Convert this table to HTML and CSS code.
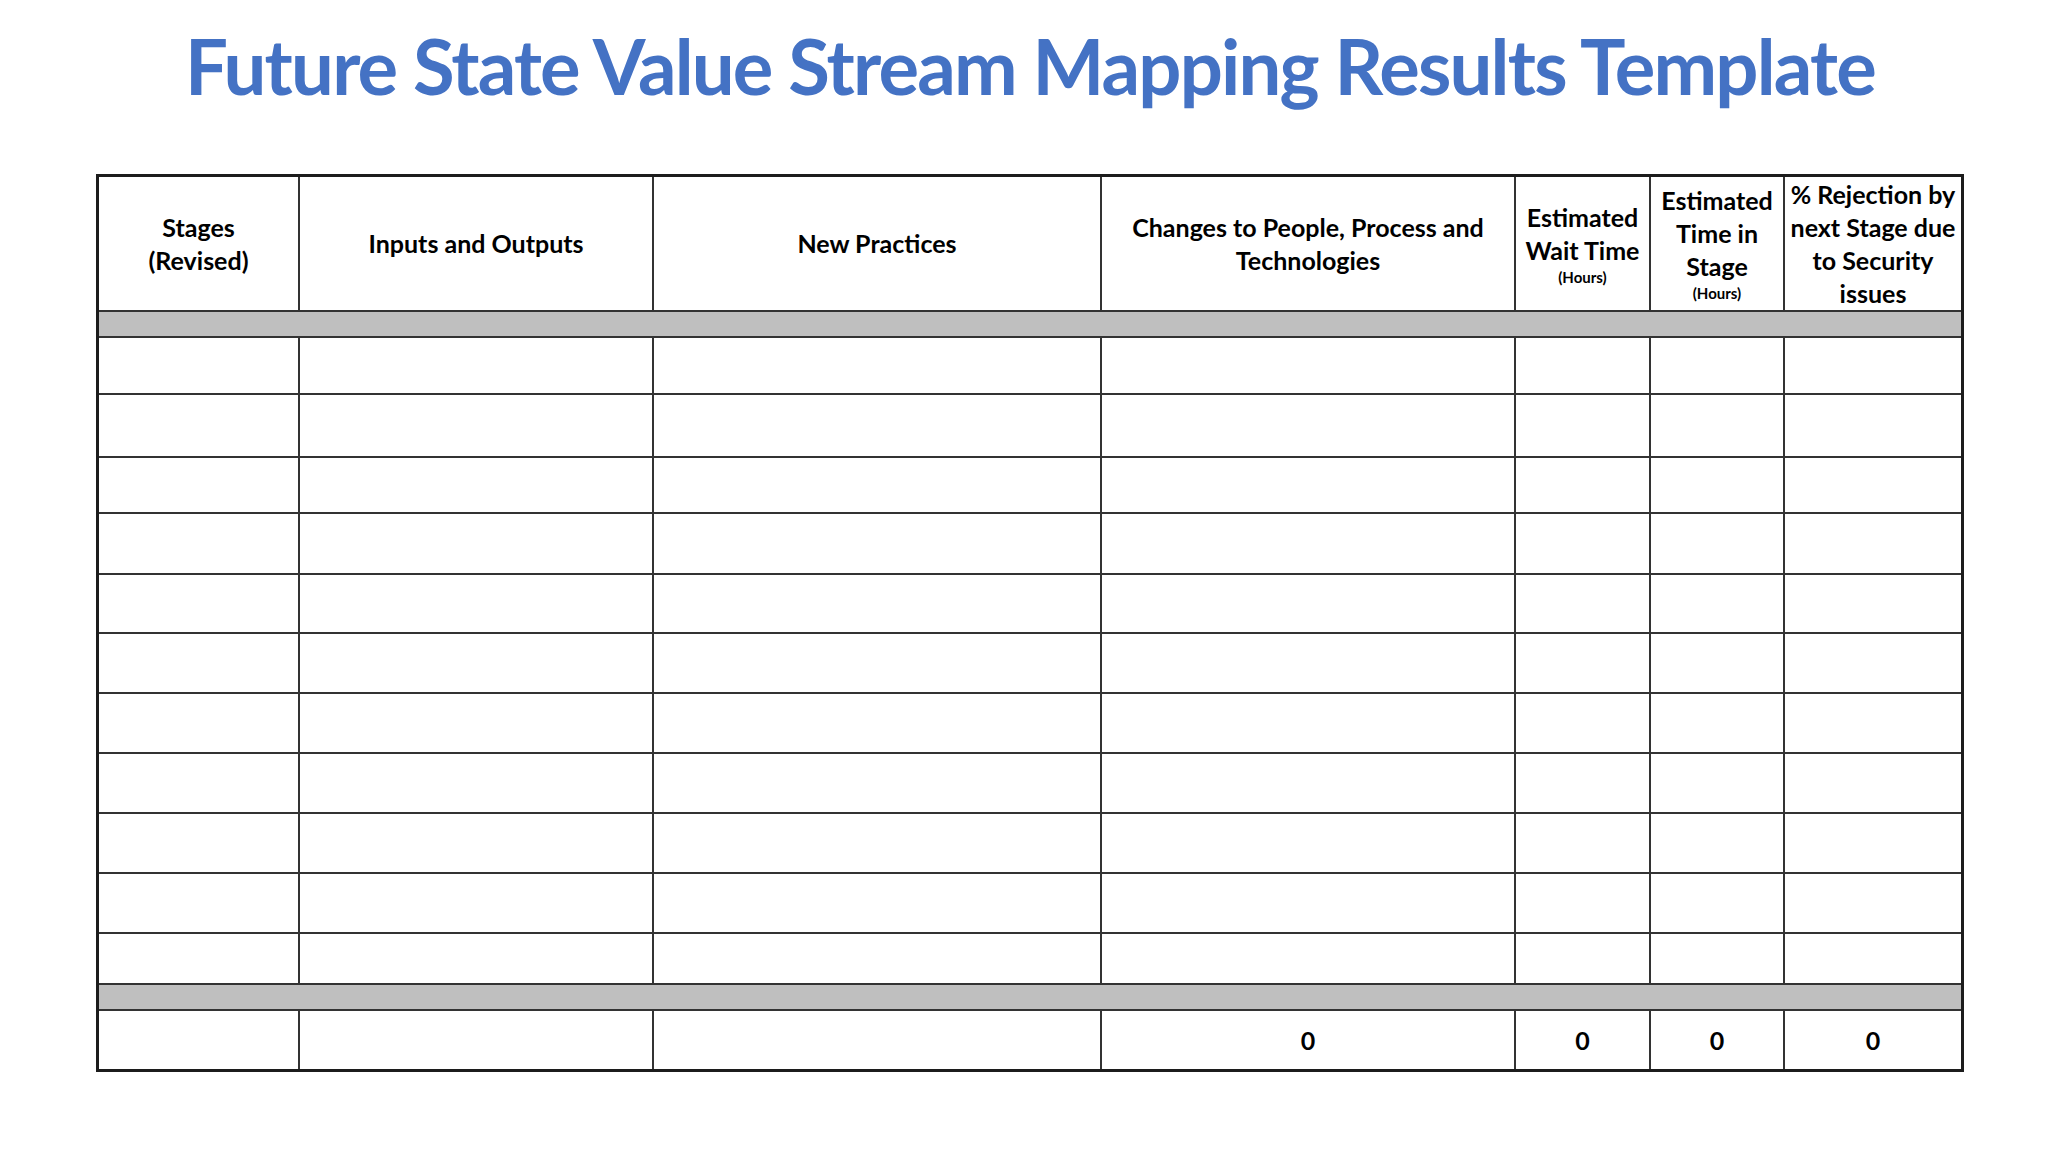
FILE: index.html
```html
<!DOCTYPE html>
<html lang="en">
<head>
<meta charset="utf-8">
<title>Future State Value Stream Mapping Results Template</title>
<link rel="stylesheet" href="styles.css">
</head>
<body>
<div class="page">
  <h1 class="title">Future State Value Stream Mapping Results Template</h1>
  <div class="sheet">
    <div class="cell th">Stages<br>(Revised)</div>
    <div class="cell th">Inputs and Outputs</div>
    <div class="cell th">New Practices</div>
    <div class="cell th">Changes to People, Process and<br>Technologies</div>
    <div class="cell th"><span>Estimated<br>Wait Time</span><span class="unit">(Hours)</span></div>
    <div class="cell th"><span>Estimated<br>Time in<br>Stage</span><span class="unit">(Hours)</span></div>
    <div class="cell th last">% Rejection by<br>next Stage due<br>to Security<br>issues</div>

    <div class="band"></div>

    <div class="cell"></div><div class="cell"></div><div class="cell"></div><div class="cell"></div><div class="cell"></div><div class="cell"></div><div class="cell last"></div>
    <div class="cell"></div><div class="cell"></div><div class="cell"></div><div class="cell"></div><div class="cell"></div><div class="cell"></div><div class="cell last"></div>
    <div class="cell"></div><div class="cell"></div><div class="cell"></div><div class="cell"></div><div class="cell"></div><div class="cell"></div><div class="cell last"></div>
    <div class="cell"></div><div class="cell"></div><div class="cell"></div><div class="cell"></div><div class="cell"></div><div class="cell"></div><div class="cell last"></div>
    <div class="cell"></div><div class="cell"></div><div class="cell"></div><div class="cell"></div><div class="cell"></div><div class="cell"></div><div class="cell last"></div>
    <div class="cell"></div><div class="cell"></div><div class="cell"></div><div class="cell"></div><div class="cell"></div><div class="cell"></div><div class="cell last"></div>
    <div class="cell"></div><div class="cell"></div><div class="cell"></div><div class="cell"></div><div class="cell"></div><div class="cell"></div><div class="cell last"></div>
    <div class="cell"></div><div class="cell"></div><div class="cell"></div><div class="cell"></div><div class="cell"></div><div class="cell"></div><div class="cell last"></div>
    <div class="cell"></div><div class="cell"></div><div class="cell"></div><div class="cell"></div><div class="cell"></div><div class="cell"></div><div class="cell last"></div>
    <div class="cell"></div><div class="cell"></div><div class="cell"></div><div class="cell"></div><div class="cell"></div><div class="cell"></div><div class="cell last"></div>
    <div class="cell"></div><div class="cell"></div><div class="cell"></div><div class="cell"></div><div class="cell"></div><div class="cell"></div><div class="cell last"></div>

    <div class="band"></div>

    <div class="cell foot"></div>
    <div class="cell foot"></div>
    <div class="cell foot"></div>
    <div class="cell foot total">0</div>
    <div class="cell foot total">0</div>
    <div class="cell foot total">0</div>
    <div class="cell foot total last">0</div>
  </div>
</div>
</body>
</html>
```
FILE: styles.css
```css
html, body {
  margin: 0;
  padding: 0;
  background: #ffffff;
}

body {
  font-family: Lato, "Open Sans", "Liberation Sans", sans-serif;
  color: #000000;
}

.page {
  width: 1868px;
  margin-left: 96px;
  padding-top: 35px;
}

.title {
  margin: 0;
  height: 139px;
  text-align: center;
  font-family: Lato, "Open Sans", sans-serif;
  font-weight: 700;
  font-size: 76px;
  line-height: 62px;
  letter-spacing: -1.8px;
  color: #4472c4;
}

.sheet {
  display: grid;
  grid-template-columns: 201px 354px 448px 414px 135px 134px 176px;
  grid-template-rows: 135px 26px 57px 63px 56px 61px 59px 60px 60px 60px 60px 60px 51px 26px 58px;
  border: 3px solid #1c1c1c;
  width: 1862px;
}

.cell {
  border-right: 2px solid #333333;
  border-bottom: 2px solid #333333;
  display: flex;
  flex-direction: column;
  align-items: center;
  justify-content: center;
  text-align: center;
  min-width: 0;
}

.cell.last {
  border-right: none;
}

.cell.foot {
  border-bottom: none;
}

.th {
  font-weight: 700;
  font-size: 25px;
  line-height: 33px;
  white-space: nowrap;
}

.unit {
  display: block;
  font-size: 15px;
  line-height: 20px;
}

.band {
  grid-column: 1 / -1;
  background: #bfbfbf;
  border-bottom: 2px solid #333333;
}

.total {
  font-weight: 700;
  font-size: 25px;
}
```
